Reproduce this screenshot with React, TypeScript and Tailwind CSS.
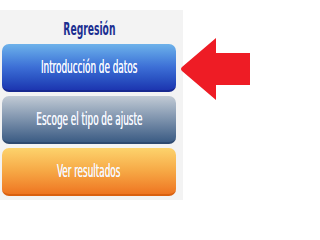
import React from "react";

const font = { fontFamily: '"DejaVu Sans Condensed", "DejaVu Sans", sans-serif' };

function Btn({ label, cls }: { label: string; cls: string }) {
  return (
    <div
      className={`h-[48px] rounded-[7px] flex items-center justify-center text-[17px] text-[#f4f7ff] ${cls}`}
      style={font}
    >
      <span className="inline-block whitespace-nowrap scale-x-[0.58] pt-[1px] [text-shadow:0_0_0.4px_#ffffff]">{label}</span>
    </div>
  );
}

export default function App() {
  return (
    <div className="w-[250px] h-[200px] bg-white relative overflow-hidden">
      <div className="absolute left-0 top-[10px] w-[183px] h-[190px] bg-[#f3f3f3] pl-[2px] pr-[7px] flex flex-col">
        <div
          className="h-[34px] flex items-center justify-center text-[#1b2f91] text-[17px] font-bold"
          style={font}
        >
          <span className="inline-block whitespace-nowrap scale-x-[0.6] pt-[5px]">Regresión</span>
        </div>
        <div className="flex flex-col gap-[4px]">
          <Btn label="Introducción de datos" cls="bg-gradient-to-b from-[#6eb2ea] via-[#3d6fd6] to-[#1d35b0] border-b-2 border-[#18298f]" />
          <Btn label="Escoge el tipo de ajuste" cls="bg-gradient-to-b from-[#c2cbd5] via-[#7e93ad] to-[#3c5c84] border-b-2 border-[#2e4a70]" />
          <Btn label="Ver resultados" cls="bg-gradient-to-b from-[#fcd36c] via-[#f6a845] to-[#ee7520] border-b-2 border-[#d9600f]" />
        </div>
      </div>
      <svg className="absolute left-[178px] top-[36px]" width="72" height="67" viewBox="0 0 72 67">
        <path d="M4 31 Q2 33 4 35 L38 64 L38 49 L72 49 L72 17 L38 17 L38 2 Z" fill="#ee1c25" />
      </svg>
    </div>
  );
}
